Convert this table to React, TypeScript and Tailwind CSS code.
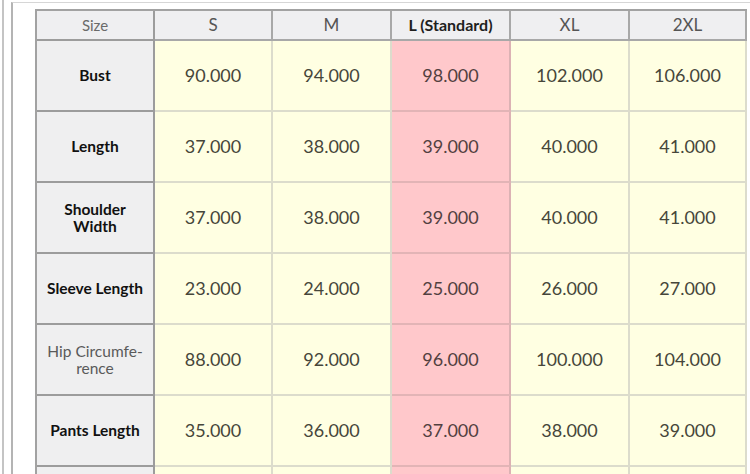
const sizes = ["S", "M", "L (Standard)", "XL", "2XL"];

const rows = [
  { label: "Bust", values: ["90.000", "94.000", "98.000", "102.000", "106.000"] },
  { label: "Length", values: ["37.000", "38.000", "39.000", "40.000", "41.000"] },
  { label: "Shoulder Width", values: ["37.000", "38.000", "39.000", "40.000", "41.000"] },
  { label: "Sleeve Length", values: ["23.000", "24.000", "25.000", "26.000", "27.000"] },
  { label: "Hip Circumfe-rence", values: ["88.000", "92.000", "96.000", "100.000", "104.000"], muted: true },
  { label: "Pants Length", values: ["35.000", "36.000", "37.000", "38.000", "39.000"] },
  { label: "", values: ["", "", "", "", ""] },
];

const App = () => {
  return (
    <div className="w-[750px] h-[474px] overflow-hidden bg-white flex font-['Lato',sans-serif]">
      <div className="w-[2px] shrink-0" />
      <div className="w-[2px] shrink-0 bg-[#c4c4c4]" />
      <div className="w-[7px] shrink-0" />
      <div className="flex-1 mt-[2px] border-l-2 border-t border-[#b4b4b4] border-t-[#d6d6d6] pl-[22px] pt-[6px]">
        <div className="grid grid-cols-[118px_118px_119px_119px_119px_117px] grid-rows-[30px_repeat(7,71px)] border-t-2 border-l-2 border-[#a2a2a2] w-fit">
          {/* header */}
          <div className="flex items-center justify-center bg-[#efeff1] border-r-2 border-b-2 border-[#9c9c9c] text-[15px] text-[#6a6a6a]">
            Size
          </div>
          {sizes.map((s, i) => (
            <div
              key={s}
              className={
                i === 2
                  ? "flex items-center justify-center bg-[#efeff1] border-r-2 border-b-2 border-[#a8a8a8] text-[16px] font-bold text-[#1e1e1e]"
                  : "flex items-center justify-center bg-[#efeff1] border-r-2 border-b-2 border-[#a8a8a8] text-[17px] text-[#555555]"
              }
            >
              {s}
            </div>
          ))}

          {rows.map((row, r) => (
            <div key={r} className="contents">
              <div
                className={
                  row.muted
                    ? "flex items-center justify-center text-center bg-[#efeff0] border-r-2 border-b-2 border-[#9c9c9c] px-2 text-[15.5px] leading-[17px] text-[#5a5a5a]"
                    : "flex items-center justify-center text-center bg-[#efeff0] border-r-2 border-b-2 border-[#9c9c9c] px-2 text-[15.5px] leading-[17px] font-bold text-[#111111]"
                }
              >
                {row.label === "Shoulder Width" ? (
                  <span>
                    Shoulder
                    <br />
                    Width
                  </span>
                ) : row.label === "Hip Circumfe-rence" ? (
                  <span>
                    Hip Circumfe-
                    <br />
                    rence
                  </span>
                ) : (
                  row.label
                )}
              </div>
              {row.values.map((v, i) => (
                <div
                  key={i}
                  className={
                    i === 2
                      ? "flex items-center justify-center bg-[#ffc8cb] border-r-2 border-b-2 border-r-[#dcb2b4] border-b-[#e2b4b6] text-[18px] text-[#524040]"
                      : "flex items-center justify-center bg-[#ffffe2] border-r-2 border-b-2 border-[#dcdccc] text-[18px] text-[#46463a]"
                  }
                >
                  {v}
                </div>
              ))}
            </div>
          ))}
        </div>
      </div>
    </div>
  );
};

export default App;
